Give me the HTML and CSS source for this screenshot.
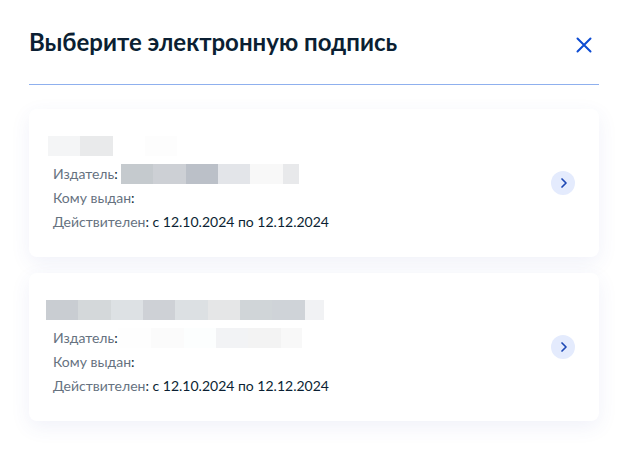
FILE: index.html
```html
<!DOCTYPE html>
<html lang="ru">
<head>
    <meta charset="UTF-8">
    <meta name="viewport" content="width=device-width, initial-scale=1.0">
    <title>Выберите электронную подпись</title>
    <link rel="stylesheet" href="styles.css">
</head>
<body>
    <main class="dialog">
        <header class="header">
            <h1 class="title">Выберите электронную подпись</h1>
            <button class="close" type="button" aria-label="Закрыть">
                <svg width="16" height="16" viewBox="0 0 16 16" fill="none" stroke="currentColor" stroke-width="2" stroke-linecap="round">
                    <path d="M1.5 1.5l13 13M14.5 1.5l-13 13"/>
                </svg>
            </button>
        </header>

        <ul class="list">
            <li class="card">
                <div class="info">
                    <div class="name"><span class="mask mask-name-1"></span></div>
                    <div class="row"><span class="label">Издатель</span>:<span class="mask mask-issuer-1"></span></div>
                    <div class="row"><span class="label">Кому выдан</span>:</div>
                    <div class="row"><span class="label">Действителен</span>: с 12.10.2024 по 12.12.2024</div>
                </div>
                <button class="select" type="button" aria-label="Выбрать">
                    <svg width="24" height="24" viewBox="0 0 24 24" fill="none" stroke="currentColor" stroke-width="1.7" stroke-linecap="round" stroke-linejoin="round">
                        <path d="M11 8l4 4-4 4"/>
                    </svg>
                </button>
            </li>
            <li class="card">
                <div class="info">
                    <div class="name"><span class="mask mask-name-2"></span></div>
                    <div class="row"><span class="label">Издатель</span>:<span class="mask mask-issuer-2"></span></div>
                    <div class="row"><span class="label">Кому выдан</span>:</div>
                    <div class="row"><span class="label">Действителен</span>: с 12.10.2024 по 12.12.2024</div>
                </div>
                <button class="select" type="button" aria-label="Выбрать">
                    <svg width="24" height="24" viewBox="0 0 24 24" fill="none" stroke="currentColor" stroke-width="1.7" stroke-linecap="round" stroke-linejoin="round">
                        <path d="M11 8l4 4-4 4"/>
                    </svg>
                </button>
            </li>
        </ul>
    </main>
</body>
</html>
```

FILE: styles.css
```css
* {
    box-sizing: border-box;
}

body {
    margin: 0;
    background: #fff;
    color: #0b1f33;
    font-family: Lato, sans-serif;
    font-size: 14px;
    line-height: 24px;
}

button {
    padding: 0;
    border: 0;
    background: none;
    cursor: pointer;
}

.dialog {
    padding: 26px 25px 28px 29px;
}

.header {
    display: flex;
    align-items: flex-start;
    justify-content: space-between;
    padding-bottom: 26px;
    border-bottom: 1px solid #8fb0ee;
}

.title {
    margin: 0;
    font-size: 24px;
    font-weight: 700;
    line-height: 32px;
}

.close {
    display: flex;
    margin-top: 11px;
    margin-right: 7px;
    color: #0d4cd3;
}

.list {
    display: flex;
    flex-direction: column;
    gap: 16px;
    margin: 24px 0 0;
    padding: 0;
    list-style: none;
}

.card {
    display: flex;
    align-items: center;
    justify-content: space-between;
    padding: 0 24px;
    border-radius: 8px;
    background: #fff;
    box-shadow: 0 6px 20px rgba(60, 80, 180, 0.08);
}

.info {
    padding: 25px 0 23px;
}

.name {
    display: flex;
    align-items: center;
    height: 28px;
    padding-bottom: 4px;
}

.row {
    display: flex;
    align-items: center;
    white-space: pre;
}

.label {
    color: #66727f;
}

.select {
    display: flex;
    border-radius: 50%;
    background: #e4ebfd;
    color: #1d48b5;
}

/* hidden personal data */
.mask {
    height: 20px;
}

.mask-name-1 {
    width: 129px;
    margin-left: -5px;
    background: linear-gradient(90deg, #f4f5f6 32px, #e9eaeb 32px 65px, #fff 65px 97px, #fdfdfd 97px);
}

.mask-issuer-1 {
    width: 178px;
    margin-left: 3px;
    background: linear-gradient(90deg, #c5cace 32px, #cdd0d5 32px 65px, #bbc0c8 65px 97px, #e3e5e9 97px 129px, #f8f8f8 129px 162px, #e8e9eb 162px);
}

.mask-name-2 {
    width: 278px;
    margin-left: -7px;
    background: linear-gradient(90deg, #c9cdd2 32px, #d4d8da 32px 65px, #dde1e4 65px 97px, #ced1d6 97px 129px, #dce0e3 129px 162px, #e5e6e7 162px 194px, #d0d5d8 194px 226px, #cfd3d8 226px 259px, #f1f2f4 259px);
}

.mask-issuer-2 {
    width: 184px;
    background: linear-gradient(90deg, #fefefe 33px, #fbfbfb 33px 66px, #fcfefe 66px 98px, #f2f3f5 98px 130px, #f3f3f3 130px 163px, #f8f8f8 163px);
}
```
